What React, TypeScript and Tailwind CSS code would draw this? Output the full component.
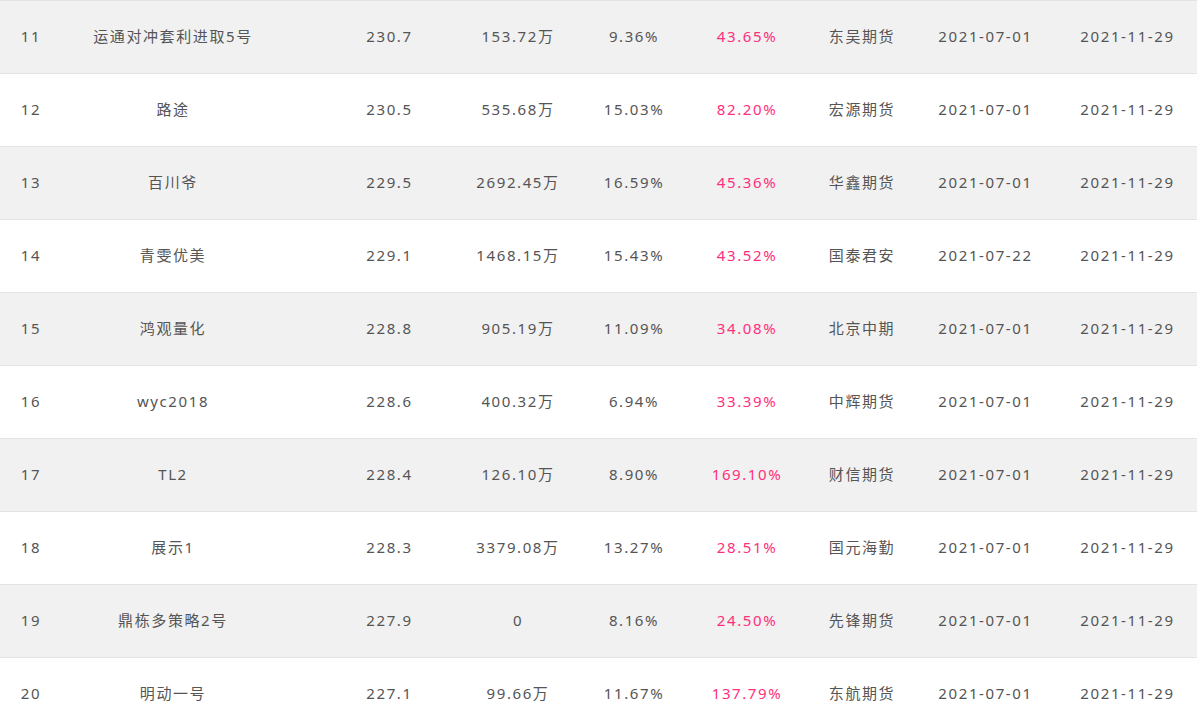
import React from "react";

interface Row {
    rank: number;
    name: string;
    score: string;
    amount: string;
    ret: string;
    maxRet: string;
    broker: string;
    start: string;
    end: string;
}

const rows: Row[] = [
    { rank: 11, name: "运通对冲套利进取5号", score: "230.7", amount: "153.72万", ret: "9.36%", maxRet: "43.65%", broker: "东吴期货", start: "2021-07-01", end: "2021-11-29" },
    { rank: 12, name: "路途", score: "230.5", amount: "535.68万", ret: "15.03%", maxRet: "82.20%", broker: "宏源期货", start: "2021-07-01", end: "2021-11-29" },
    { rank: 13, name: "百川爷", score: "229.5", amount: "2692.45万", ret: "16.59%", maxRet: "45.36%", broker: "华鑫期货", start: "2021-07-01", end: "2021-11-29" },
    { rank: 14, name: "青雯优美", score: "229.1", amount: "1468.15万", ret: "15.43%", maxRet: "43.52%", broker: "国泰君安", start: "2021-07-22", end: "2021-11-29" },
    { rank: 15, name: "鸿观量化", score: "228.8", amount: "905.19万", ret: "11.09%", maxRet: "34.08%", broker: "北京中期", start: "2021-07-01", end: "2021-11-29" },
    { rank: 16, name: "wyc2018", score: "228.6", amount: "400.32万", ret: "6.94%", maxRet: "33.39%", broker: "中辉期货", start: "2021-07-01", end: "2021-11-29" },
    { rank: 17, name: "TL2", score: "228.4", amount: "126.10万", ret: "8.90%", maxRet: "169.10%", broker: "财信期货", start: "2021-07-01", end: "2021-11-29" },
    { rank: 18, name: "展示1", score: "228.3", amount: "3379.08万", ret: "13.27%", maxRet: "28.51%", broker: "国元海勤", start: "2021-07-01", end: "2021-11-29" },
    { rank: 19, name: "鼎栋多策略2号", score: "227.9", amount: "0", ret: "8.16%", maxRet: "24.50%", broker: "先锋期货", start: "2021-07-01", end: "2021-11-29" },
    { rank: 20, name: "明动一号", score: "227.1", amount: "99.66万", ret: "11.67%", maxRet: "137.79%", broker: "东航期货", start: "2021-07-01", end: "2021-11-29" },
];

export default function App() {
    return (
        <div
            className="w-[1197px] h-[721px] overflow-hidden bg-white text-[15px] text-[#555555] tracking-[1.6px]"
            style={{ fontFamily: '"Noto Sans", "Noto Sans CJK SC", sans-serif' }}
        >
            <div className="border-t border-[#e3e3e8]">
                {rows.map((r, i) => (
                    <div
                        key={r.rank}
                        className={`grid grid-cols-[102px_180px_171px_123px_114px_114px_119px_133px_141px] h-[73px] pb-[2px] items-center border-b border-[#e3e3e8] whitespace-nowrap ${i % 2 === 0 ? "bg-[#f1f1f1]" : "bg-white"}`}
                    >
                        <div className="flex justify-center pr-[40px]">{r.rank}</div>
                        <div className="flex justify-center pr-[38px]">{r.name}</div>
                        <div className="flex justify-center pl-[44px]">{r.score}</div>
                        <div className="flex justify-center pl-[7px]">{r.amount}</div>
                        <div className="flex justify-center pl-[2px]">{r.ret}</div>
                        <div className="flex justify-center text-[#ff2f7b]">{r.maxRet}</div>
                        <div className="flex justify-center pr-[3px]">{r.broker}</div>
                        <div className="flex justify-center pr-[8px]">{r.start}</div>
                        <div className="flex justify-center pl-[2px]">{r.end}</div>
                    </div>
                ))}
            </div>
        </div>
    );
}
